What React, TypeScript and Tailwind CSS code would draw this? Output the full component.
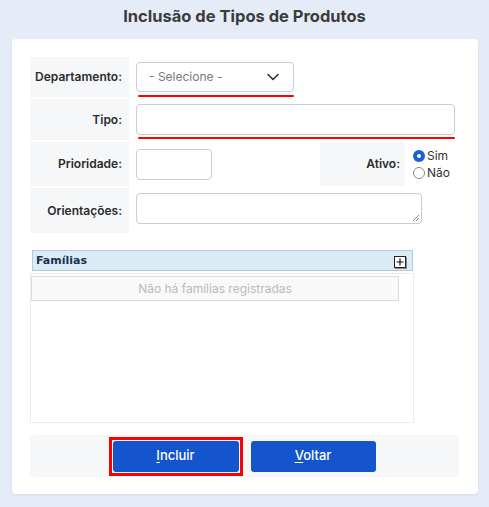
import React from "react";

const font = { fontFamily: "Inter, 'Open Sans', sans-serif" };

function Label({ children, className = "" }: { children: React.ReactNode; className?: string }) {
  return (
    <div className={`w-[99px] shrink-0 bg-[#f6f7f9] flex items-center justify-end pr-[7px] text-[12px] font-semibold text-[#2b2b2b] ${className}`}>
      {children}
    </div>
  );
}

export default function App() {
  return (
    <div className="w-[489px] h-[507px] bg-[#e6ecf7] overflow-hidden" style={font}>
      <h1 className="text-center text-[16.5px] font-bold text-[#3d3b3b] pt-[4px] h-[39px] leading-[24px]">
        Inclusão de Tipos de Produtos
      </h1>
      <div className="mx-[12px] w-[466px] h-[455px] bg-white rounded-[4px] shadow-[0_1px_3px_rgba(0,0,0,0.08)] pt-[18px] px-[18px]">
        {/* Departamento */}
        <div className="flex h-[40px]">
          <Label>Departamento:</Label>
          <div className="ml-[7px] pt-[5px]">
            <div className="w-[158px] h-[30px] border border-[#c9ccd1] rounded-[4px] flex items-center justify-between pl-[12px] pr-[14px]">
              <span className="text-[12px] text-[#7a7a7a]">- Selecione -</span>
              <svg width="12" height="8" viewBox="0 0 12 8" fill="none">
                <path d="M1 1.5L6 6.5L11 1.5" stroke="#333" strokeWidth="1.6" strokeLinecap="round" strokeLinejoin="round" />
              </svg>
            </div>
            <div className="ml-[2px] mt-[3px] w-[156px] h-[2px] bg-[#ff0000] rounded-full" />
          </div>
        </div>
        {/* Tipo */}
        <div className="flex h-[41px] mt-[2px]">
          <Label>Tipo:</Label>
          <div className="ml-[7px] pt-[5px]">
            <div className="w-[319px] h-[31px] border border-[#c9ccd1] rounded-[4px]" />
            <div className="ml-[2px] mt-[2px] w-[317px] h-[2px] bg-[#ff0000] rounded-full" />
          </div>
        </div>
        {/* Prioridade / Ativo */}
        <div className="flex h-[44px] mt-[2px]">
          <Label>Prioridade:</Label>
          <div className="ml-[7px] pt-[7px] w-[184px]">
            <div className="w-[76px] h-[31px] border border-[#c9ccd1] rounded-[4px]" />
          </div>
          <div className="w-[85px] bg-[#f6f7f9] flex items-center justify-end pr-[5px] text-[12px] font-semibold text-[#2b2b2b]">
            Ativo:
          </div>
          <div className="ml-[8px] pt-[7px] flex flex-col gap-[3px] text-[12px] text-[#333]">
            <label className="flex items-center gap-[2px] h-[14px]">
              <span className="w-[12px] h-[12px] rounded-full bg-[#1a5fd6] flex items-center justify-center">
                <span className="w-[4px] h-[4px] rounded-full bg-white" />
              </span>
              Sim
            </label>
            <label className="flex items-center gap-[2px] h-[14px]">
              <span className="w-[12px] h-[12px] rounded-full border border-[#8a8a8a] bg-white" />
              Não
            </label>
          </div>
        </div>
        {/* Orientações */}
        <div className="flex h-[45px] mt-[2px]">
          <Label>Orientações:</Label>
          <div className="ml-[7px] pt-[5px]">
            <div className="relative w-[286px] h-[31px] border border-[#c9ccd1] rounded-[4px]">
              <svg className="absolute right-[1px] bottom-[1px]" width="8" height="8" viewBox="0 0 8 8">
                <path d="M7 1L1 7M7 4L4 7" stroke="#777" strokeWidth="0.9" />
              </svg>
            </div>
          </div>
        </div>
        {/* Famílias */}
        <div className="mt-[17px] w-[384px]">
          <div className="ml-[2px] w-[381px] h-[21px] bg-[#d9ecf6] border border-[#b8c9dc] flex items-center justify-between pl-[3px] pr-[6px]">
            <span className="mt-[2px] text-[11px] font-bold text-[#1d2f4f]" style={{ fontFamily: "'DejaVu Sans', Verdana, sans-serif" }}>Famílias</span>
            <span className="mt-[3px] w-[12px] h-[12px] border border-[#222] bg-white flex items-center justify-center shadow-[1px_1px_0_#888]">
              <svg width="8" height="8" viewBox="0 0 8 8">
                <path d="M4 0.5V7.5M0.5 4H7.5" stroke="#111" strokeWidth="1.2" />
              </svg>
            </span>
          </div>
          <div className="mt-[2px] h-[150px] border border-[#ececec] pt-[2px] pl-[0px]">
            <div className="w-[368px] h-[25px] bg-[#f9f9f9] border border-[#dcdcdc] flex items-center justify-center text-[12px] text-[#b9b9b9]">
              Não há famílias registradas
            </div>
          </div>
        </div>
        {/* Buttons */}
        <div className="mt-[12px] w-[429px] h-[42px] bg-[#f6f7f9] rounded-[4px] flex items-center justify-center gap-[8px] pr-[5px]">
          <div className="w-[134px] h-[39px] border-[3px] border-[#ff0000] p-[1px]">
            <button className="w-full h-full bg-[#1454cc] rounded-[3px] text-white text-[13px] font-medium">
              <span className="underline underline-offset-2">I</span>ncluir
            </button>
          </div>
          <button className="w-[125px] h-[31px] bg-[#1454cc] rounded-[3px] text-white text-[13px] font-medium">
            <span className="underline underline-offset-2">V</span>oltar
          </button>
        </div>
      </div>
    </div>
  );
}
